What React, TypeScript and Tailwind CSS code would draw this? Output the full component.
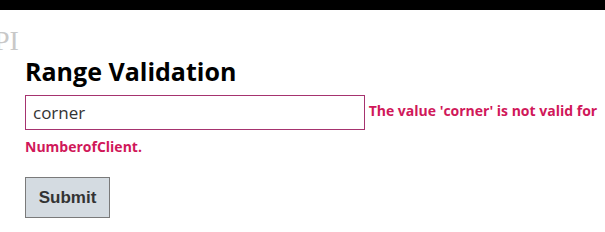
export default function App() {
  return (
    <div className="w-[605px] h-[232px] overflow-hidden bg-white">
      <div className="h-[10px] bg-black" />
      <div className="pl-[25px]">
        <div className="-ml-[31px] mt-[16px] h-[30px] text-[28px] leading-[30px] text-[#c8c8c8] font-['Liberation_Serif',serif]">
          PI
        </div>
        <h2 className="mt-0 text-[25px] leading-[30px] font-bold text-black font-['Open_Sans',sans-serif]">
          Range Validation
        </h2>
        <div className="mt-[8px] w-[580px] text-[14px] leading-[33px] font-bold text-[#d0185a] font-['Open_Sans',sans-serif]">
          <input
            type="text"
            defaultValue="corner"
            className="inline-block align-middle w-[340px] h-[35px] border border-[#a6336f] px-[7px] text-[17px] font-normal text-[#333] font-['Open_Sans',sans-serif] outline-none"
          />{" "}
          <span>The value 'corner' is not valid for NumberofClient.</span>
        </div>
        <button className="mt-[14px] w-[85px] h-[41px] bg-[#d4dbe1] border border-[#7a7a7a] text-[17px] font-bold text-[#333] font-['Liberation_Sans',sans-serif]">
          Submit
        </button>
      </div>
    </div>
  );
}
